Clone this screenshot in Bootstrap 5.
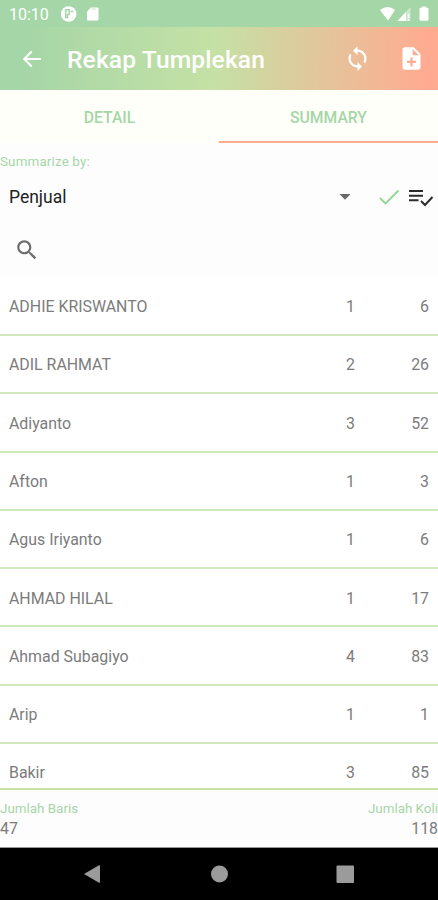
<!DOCTYPE html>
<html lang="id">
<head>
<meta charset="utf-8">
<meta name="viewport" content="width=device-width, initial-scale=1">
<title>Rekap Tumplekan</title>
<link href="https://cdn.jsdelivr.net/npm/bootstrap@5.3.0/dist/css/bootstrap.min.css" rel="stylesheet">
<style>
body{font-family:Roboto,sans-serif;background:#fdfdfd;color:#7c7c7c;font-size:15.9px;line-height:20px}
svg{display:block;flex:none}
.screen{height:900px}
.status-bar{height:27px;background:#a5d6a7;padding:1px 7px 0 9px;font-size:16px}
.clock{line-height:18px;padding-top:1px}
.app-bar{height:63px;background:linear-gradient(92deg,#a5d6a7 5%,#c5e1a5 49%,#ffab91 97%);padding:0 13px 0 20px}
.app-title{font-size:24.6px;font-weight:500;line-height:30px;margin-left:23px;padding-top:2px;letter-spacing:.12px}
.app-actions{gap:27px}
.tab-strip{height:53px;background:#fffffa}
.tab-strip .nav-link{color:#a5d6a7;border-radius:0;padding:4px 0 0;font-size:15.7px;font-weight:500;border-bottom:2px solid transparent}
.tab-strip .nav-link.active{color:#a5d6a7;border-bottom-color:#ffab91}
.field-label{color:#a5d6a7;font-size:13.4px;line-height:16px}
.summarize{padding-top:11px;height:27px;letter-spacing:.15px}
.picker{height:55px;padding:0 4px 1px 9px}
.picker-value{color:#222;font-size:17.5px}
.pick-check{margin:0 5px 0 24px}
.search-box{height:52px;padding:0 0 3px 14px}
.rows{height:511px;background:#fff;padding-top:.7px}
.entry{height:58.3px;padding:2.4px 9px 0;border-bottom:2px solid #cfe9bb;flex:none}
.count{width:40px}
.total{width:74px}
.footer-bar{height:60px;border-top:2px solid #c5e1a5;border-bottom:1px solid #999;padding-top:11px}
.footer-bar .sum{line-height:21px;margin-top:1px}
.nav-keys{height:52px}
</style>
</head>
<body>
<div class="screen d-flex flex-column overflow-hidden">
  <div class="status-bar d-flex align-items-center text-white flex-shrink-0">
    <span class="clock">10:10</span>
    <svg class="ms-2" width="24" height="18" viewBox="0 0 24 18"><circle cx="11.700" cy="9" r="7.800" fill="#fff"/><path d="M8.700 4.800V12.500h1.800V9.500h1.700V4.800z" fill="none" stroke="#a5d6a7" stroke-width="1.500"/><path d="M13.500 6.500h2.800" stroke="#a5d6a7" stroke-width="1.500"/></svg>
    <svg class="ms-1" width="18" height="18" viewBox="0 0 18 18"><path d="M6 2.500h6.500q1 0 1 1v11q0 1-1 1h-9.500q-1 0-1-1v-8z" fill="#fff"/><path d="M6.500 4h5" stroke="#a5d6a7" opacity=".6"/></svg>
    <div class="ms-auto d-flex align-items-center">
      <svg width="18" height="16" viewBox="0 0 18 16"><path d="M11 14.500 2.900 4Q11-1.800 18 4z" fill="#fff"/></svg>
      <svg width="18" height="16" viewBox="0 0 18 16"><path d="M2.500 15 15.500 1v14z" fill="#fff" opacity=".45"/><path d="M2.500 15 11 5.800V15zM12.800 8h1.500v4h-1.500zM12.800 13h1.500v2h-1.500z" fill="#fff"/></svg>
      <svg class="ms-1" width="14" height="16" viewBox="0 0 14 16"><path d="M5 .5h4v1.200h1.500q1 0 1 1v11q0 1-1 1h-7q-1 0-1-1v-11q0-1 1-1H5z" fill="#fff"/></svg>
    </div>
  </div>
  <header class="app-bar d-flex align-items-center text-white flex-shrink-0">
    <svg width="24" height="24" viewBox="0 0 24 24"><path fill="#fff" d="M21 10.900H6.800l5.600-5.700L11 3.800 2.800 12l8.200 8.200 1.400-1.400-5.600-5.700H21z"/></svg>
    <h1 class="app-title mb-0">Rekap Tumplekan</h1>
    <div class="app-actions d-flex ms-auto">
      <svg width="27" height="27" viewBox="0 0 24 24"><path fill="#fff" d="M12 4V1L8 5l4 4V6c3.310 0 6 2.690 6 6 0 1.010-.25 1.970-.7 2.800l1.460 1.460C19.540 15.030 20 13.570 20 12c0-4.420-3.580-8-8-8zm0 14c-3.310 0-6-2.690-6-6 0-1.010.25-1.970.7-2.800L5.240 7.740C4.460 8.970 4 10.430 4 12c0 4.420 3.580 8 8 8v3l4-4-4-4v3z"/></svg>
      <svg width="27" height="27" viewBox="0 0 24 24"><path fill="#fff" d="M14 2H6c-1.100 0-1.990.9-1.990 2L4 20c0 1.100.89 2 1.990 2H18c1.100 0 2-.9 2-2V8l-6-6zm2 14h-3v3h-2v-3H8v-2h3v-3h2v3h3v2zm-3-7V3.500L18.500 9H13z"/></svg>
    </div>
  </header>
  <ul class="tab-strip nav nav-justified flex-shrink-0">
    <li class="nav-item d-flex"><a class="nav-link w-100 d-flex align-items-center justify-content-center" href="#">DETAIL</a></li>
    <li class="nav-item d-flex"><a class="nav-link active w-100 d-flex align-items-center justify-content-center" href="#">SUMMARY</a></li>
  </ul>
  <div class="summarize field-label flex-shrink-0">Summarize by:</div>
  <div class="picker d-flex align-items-center flex-shrink-0">
    <span class="picker-value">Penjual</span>
    <svg class="ms-auto" width="12" height="6" viewBox="0 0 12 6"><path d="M.5 0h11L6 5.700z" fill="#686868"/></svg>
    <svg class="pick-check" width="28" height="24" viewBox="0 0 28 24"><path d="m5 13 5.500 5.500L23.500 5.500" fill="none" stroke="#92d795" stroke-width="1.800"/></svg>
    <svg width="26" height="22" viewBox="0 0 26 22"><path d="M1 5h14M1 9.700h14M1 14.300h9.500M13 15l4 4 7.500-8" fill="none" stroke="#2c2c2c" stroke-width="2"/></svg>
  </div>
  <div class="search-box d-flex align-items-center flex-shrink-0">
    <svg width="26" height="26" viewBox="0 0 24 24"><path fill="#6c6c6c" d="M15.500 14h-.79l-.28-.27C15.410 12.590 16 11.110 16 9.500 16 5.910 13.090 3 9.500 3S3 5.910 3 9.500 5.910 16 9.500 16c1.610 0 3.090-.59 4.230-1.570l.27.28v.79l5 4.990L20.490 19l-4.990-5zm-6 0C7.010 14 5 11.990 5 9.500S7.010 5 9.500 5 14 7.010 14 9.500 11.990 14 9.500 14z"/></svg>
  </div>
  <main class="rows d-flex flex-column overflow-hidden flex-shrink-0">
    <div class="entry d-flex align-items-center"><span class="me-auto">ADHIE KRISWANTO</span><span class="count text-end">1</span><span class="total text-end">6</span></div>
    <div class="entry d-flex align-items-center"><span class="me-auto">ADIL RAHMAT</span><span class="count text-end">2</span><span class="total text-end">26</span></div>
    <div class="entry d-flex align-items-center"><span class="me-auto">Adiyanto</span><span class="count text-end">3</span><span class="total text-end">52</span></div>
    <div class="entry d-flex align-items-center"><span class="me-auto">Afton</span><span class="count text-end">1</span><span class="total text-end">3</span></div>
    <div class="entry d-flex align-items-center"><span class="me-auto">Agus Iriyanto</span><span class="count text-end">1</span><span class="total text-end">6</span></div>
    <div class="entry d-flex align-items-center"><span class="me-auto">AHMAD HILAL</span><span class="count text-end">1</span><span class="total text-end">17</span></div>
    <div class="entry d-flex align-items-center"><span class="me-auto">Ahmad Subagiyo</span><span class="count text-end">4</span><span class="total text-end">83</span></div>
    <div class="entry d-flex align-items-center"><span class="me-auto">Arip</span><span class="count text-end">1</span><span class="total text-end">1</span></div>
    <div class="entry d-flex align-items-center"><span class="me-auto">Bakir</span><span class="count text-end">3</span><span class="total text-end">85</span></div>
  </main>
  <footer class="footer-bar d-flex justify-content-between flex-shrink-0">
    <div><div class="field-label">Jumlah Baris</div><div class="sum">47</div></div>
    <div class="text-end"><div class="field-label">Jumlah Koli</div><div class="sum">118</div></div>
  </footer>
  <nav class="nav-keys bg-black d-flex align-items-center justify-content-center flex-shrink-0">
    <svg width="272" height="20" viewBox="0 0 272 20"><g fill="#9b9b9b"><path d="M1 10 16 1.300q1-.4 1 .7v16q0 1.100-1 .7z"/><circle cx="136.500" cy="10" r="8.500"/><rect x="253.500" y="1.500" width="17.500" height="17.500" rx="1"/></g></svg>
  </nav>
</div>
<script src="https://cdn.jsdelivr.net/npm/bootstrap@5.3.0/dist/js/bootstrap.bundle.min.js"></script>
</body>
</html>
